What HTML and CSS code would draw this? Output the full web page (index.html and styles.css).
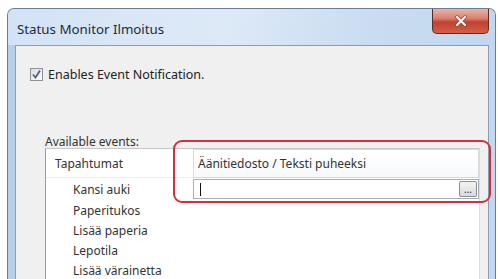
FILE: index.html
```html
<!DOCTYPE html>
<html lang="fi">
<head>
    <meta charset="UTF-8">
    <title>Status Monitor Ilmoitus</title>
    <link rel="stylesheet" href="styles.css">
</head>
<body>
    <div class="window">
        <div class="titlebar">
            <span class="title">Status Monitor Ilmoitus</span>
            <div class="close-btn">
                <svg width="14" height="12" viewBox="0 0 14 12">
                    <path d="M3 2 L11 10 M11 2 L3 10" stroke="#8a3a30" stroke-width="3.4" stroke-linecap="round"/>
                    <path d="M3 2 L11 10 M11 2 L3 10" stroke="#fff" stroke-width="2.2" stroke-linecap="round"/>
                </svg>
            </div>
        </div>
        <div class="client">
            <label class="check-row">
                <span class="checkbox">
                    <svg width="11" height="11" viewBox="0 0 11 11">
                        <path d="M2 5.5 L4.5 8.5 L9 1.5" fill="none" stroke="#4d6285" stroke-width="1.8"/>
                    </svg>
                </span>
                Enables Event Notification.
            </label>

            <div class="events">
                <div class="events-label">Available events:</div>
                <div class="events-table">
                    <div class="head-cell">Tapahtumat</div>
                    <div class="head-cell head-sound">Äänitiedosto / Teksti puheeksi</div>

                    <div class="event-cell">Kansi auki</div>
                    <div class="sound-cell">
                        <div class="sound-input">
                            <span class="caret"></span>
                            <span class="browse-btn">...</span>
                        </div>
                    </div>

                    <div class="event-cell">Paperitukos</div>
                    <div class="sound-cell"></div>
                    <div class="event-cell">Lisää paperia</div>
                    <div class="sound-cell"></div>
                    <div class="event-cell">Lepotila</div>
                    <div class="sound-cell"></div>
                    <div class="event-cell">Lisää värainetta</div>
                    <div class="sound-cell"></div>
                </div>
                <div class="highlight"></div>
            </div>
        </div>
    </div>
</body>
</html>
```

FILE: styles.css
```css
body {
    margin: 0;
    background: #fff;
    font-family: "Noto Sans", "Open Sans", sans-serif;
    color: #222;
    overflow: hidden;
    height: 279px;
}
.window {
    margin: 8px 0 0 7px;
    width: 489px;
    height: 320px;
    border: 1px solid #6a7d93;
    border-bottom: none;
    border-radius: 7px 7px 0 0;
    background: linear-gradient(90deg, #b8cfe8 0%, #cfe0f3 40%, #c3d8ee 100%);
    padding: 0 6px 0 7px;
    box-sizing: border-box;
    display: flex;
    flex-direction: column;
}
.titlebar {
    height: 36px;
    display: flex;
    align-items: flex-start;
    background: linear-gradient(100deg, #d3e3f5 0%, #dde9f7 45%, #c9dcf1 75%, #c2d7ee 100%);
    margin: 0 -6px 0 -7px;
    padding: 0 6px 0 9px;
    border-radius: 6px 6px 0 0;
}
.title {
    font-size: 13.3px;
    color: #1c2c3c;
    margin-top: 11px;
}
.close-btn {
    margin-left: auto;
    width: 55px;
    height: 24px;
    border: 1px solid #5e2a24;
    border-top: none;
    border-radius: 0 0 5px 5px;
    background: linear-gradient(180deg, #eab3a6 0%, #db8472 38%, #c2412f 55%, #d0604a 100%);
    display: flex;
    align-items: center;
    justify-content: center;
}
.client {
    flex: 1;
    border: 1px solid #8b9db3;
    background: #f0f0f0;
    padding: 20px 0 0 14px;
}
.check-row {
    display: flex;
    align-items: center;
    gap: 5px;
    font-size: 12.5px;
    color: #222;
}
.checkbox {
    width: 11px;
    height: 11px;
    border: 1px solid #8f9196;
    background: linear-gradient(135deg, #dcdde0, #fcfcfc);
    display: flex;
    align-items: center;
    justify-content: center;
}
.events {
    position: relative;
    margin: 52px 0 0 15px;
}
.events-label {
    font-size: 12px;
    color: #333;
    height: 13px;
    line-height: 13px;
}
.events-table {
    width: 433px;
    background: #fff;
    border-left: 1px solid #9c9c9c;
    border-top: 1px solid #c6c6c6;
    border-right: 1px solid #dedede;
    display: grid;
    grid-template-columns: 147px 1fr;
    grid-template-rows: 29px 22px;
    grid-auto-rows: 20px;
    font-size: 12px;
}
.head-cell {
    display: flex;
    align-items: center;
    padding-left: 9px;
    color: #333;
    border-bottom: 1px solid #ececec;
}
.head-sound {
    padding-left: 4px;
    border: 1px solid #d6d9de;
    background: linear-gradient(180deg, #ffffff 0%, #f8f9fb 100%);
}
.event-cell {
    display: flex;
    align-items: center;
    padding-left: 27px;
    color: #333;
}
.sound-cell {
    display: flex;
    align-items: center;
}
.sound-input {
    flex: 1;
    height: 18px;
    border: 1px solid #a9adb5;
    background: #fff;
    display: flex;
    align-items: center;
}
.caret {
    width: 1px;
    height: 13px;
    background: #111;
    margin-left: 6px;
}
.browse-btn {
    margin-left: auto;
    margin-right: 1px;
    width: 16px;
    height: 14px;
    border: 1px solid #8a8f96;
    border-radius: 2px;
    background: linear-gradient(180deg, #f4f4f4, #d8dadd);
    font-size: 10px;
    line-height: 14px;
    text-align: center;
    color: #333;
}
.highlight {
    position: absolute;
    left: 128px;
    top: 5px;
    width: 314px;
    height: 59px;
    border: 2px solid #d2303c;
    border-radius: 9px;
    pointer-events: none;
}
```
